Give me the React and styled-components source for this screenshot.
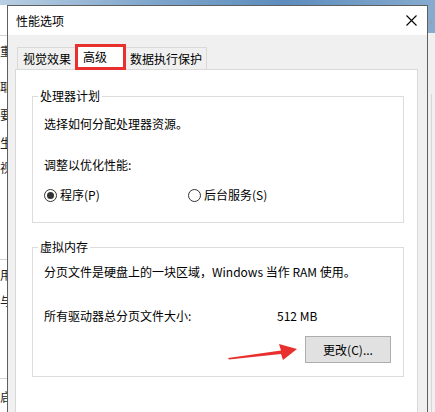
import React from 'react';
import styled, { createGlobalStyle } from 'styled-components';

const GlobalStyle = createGlobalStyle`
  html, body {
    margin: 0;
    padding: 0;
  }
  body {
    width: 435px;
    height: 412px;
    overflow: hidden;
    font-family: "Noto Sans CJK SC", "Noto Sans", sans-serif;
    font-size: 12px;
    color: #000000;
  }
`;

const Screen = styled.div`
  position: relative;
  display: grid;
  grid-template-columns: 7px 421px 7px;
  grid-template-rows: 5px 407px;
  width: 435px;
  height: 412px;
  overflow: hidden;
  background: #ffffff;
`;

const Sky = styled.div`
  grid-column: 1 / -1;
  background: linear-gradient(90deg, #b9cfe2 0%, #7fa6cc 35%, #5d8dbd 65%, #86abcf 100%);
`;

const LeftPeek = styled.div`
  display: flex;
  flex-direction: column;
  overflow: hidden;
  background: #ffffff;
  border-top: 30px solid #ffffff;
`;

const PeekLine = styled.div`
  height: 1px;
  background: #d4d4d4;
  margin-top: ${(p) => p.$top || 0}px;
  width: 7px;
`;

const PeekChar = styled.div`
  font-size: 12px;
  line-height: 14px;
  height: 14px;
  color: #222222;
  white-space: nowrap;
  margin-top: ${(p) => p.$top || 0}px;
`;

const RightPeek = styled.div`
  display: flex;
  flex-direction: column;
  overflow: hidden;
  background: linear-gradient(to bottom, #87aacd 0, #87aacd 28px, #f0f0f0 28px);
`;

const RightRule = styled.div`
  flex: 1;
  margin: 66px 0 0 3px;
  border-left: 1px solid #d6d6d6;
`;

const PeekArrow = styled.div`
  margin: 9px 0 0 2px;
  color: #9a9a9a;
  font-size: 12px;
  line-height: 14px;
  height: 14px;
`;

const Dialog = styled.div`
  display: flex;
  flex-direction: column;
  border: 1px solid #5f5f5f;
  border-bottom: none;
  background: #f0f0f0;
  min-height: 0;
`;

const TitleBar = styled.div`
  display: flex;
  align-items: center;
  justify-content: space-between;
  height: 29px;
  padding: 0 10px 0 8px;
  background: #ffffff;
`;

const TitleText = styled.span`
  font-size: 12px;
  line-height: 16px;
`;

const Body = styled.div`
  flex: 1;
  display: flex;
  flex-direction: column;
  padding: 9px 9px 0 7px;
  min-height: 0;
`;

const TabStrip = styled.div`
  position: relative;
  z-index: 1;
  display: flex;
  align-items: flex-end;
  height: 25px;
  padding-left: 2px;
`;

const Tab = styled.div`
  box-sizing: border-box;
  width: ${(p) => p.$width}px;
  height: 22px;
  border: 1px solid #d9d9d9;
  border-bottom: none;
  background: #f0f0f0;
  line-height: 21px;
  text-align: center;
  white-space: nowrap;
`;

const ActiveTab = styled.div`
  box-sizing: border-box;
  width: 51px;
  height: 26px;
  margin: 0 -1px -1px -2px;
  border: 3px solid #e8302f;
  background: #ffffff;
  padding-left: 5px;
  line-height: 20px;
  position: relative;
  z-index: 2;
`;

const Panel = styled.div`
  flex: 1;
  background: #ffffff;
  border: 1px solid #d9d9d9;
  border-bottom: none;
  padding: 18px 13px 0 16px;
`;

const Group = styled.fieldset`
  margin: ${(p) => p.$top || 0}px 0 0 0;
  padding: 0 12px ${(p) => p.$bottom}px 11px;
  border: 1px solid #dcdcdc;
  min-width: 0;
`;

const Legend = styled.legend`
  padding: 0 2px;
  margin-left: -6px;
  font-size: 12px;
  line-height: 16px;
`;

const Line = styled.div`
  line-height: 16px;
  margin-top: ${(p) => p.$top || 0}px;
  white-space: nowrap;
`;

const RadioRow = styled.div`
  display: grid;
  grid-template-columns: 144px auto;
  margin-top: ${(p) => p.$top || 0}px;
  line-height: 16px;
`;

const RadioOption = styled.label`
  display: flex;
  align-items: center;
  gap: 3px;
`;

const RadioCircle = styled.span`
  box-sizing: border-box;
  width: 13px;
  height: 13px;
  border: 1px solid #333333;
  border-radius: 50%;
  display: grid;
  place-items: center;

  &::after {
    content: '';
    width: 7px;
    height: 7px;
    border-radius: 50%;
    background: ${(p) => (p.$checked ? '#333333' : 'transparent')};
  }
`;

const SizeRow = styled.div`
  display: grid;
  grid-template-columns: 233px auto;
  line-height: 16px;
  margin-top: ${(p) => p.$top || 0}px;
`;

const ButtonRow = styled.div`
  display: flex;
  justify-content: flex-end;
  margin-top: ${(p) => p.$top || 0}px;
`;

const ChangeButton = styled.button`
  box-sizing: border-box;
  width: 86px;
  height: 27px;
  padding: 0;
  background: #e1e1e1;
  border: 1px solid #adadad;
  font-family: inherit;
  font-size: 12px;
  color: #000000;
`;

const ArrowMark = styled.svg`
  position: absolute;
  left: 224px;
  top: 340px;
  width: 76px;
  height: 24px;
  pointer-events: none;
`;

function CloseIcon() {
  return (
    <svg width="11" height="11" viewBox="0 0 11 11">
      <path d="M0.5 0.5 L10.5 10.5 M10.5 0.5 L0.5 10.5" stroke="#000" strokeWidth="1.1" />
    </svg>
  );
}

function App() {
  return (
    <>
      <GlobalStyle />
      <Screen>
        <Sky />
        <LeftPeek>
          <PeekLine />
          <PeekChar $top={8}>重</PeekChar>
          <PeekLine $top={31} />
          <PeekChar $top={-10}>耶</PeekChar>
          <PeekChar $top={14}>要</PeekChar>
          <PeekChar $top={14}>生</PeekChar>
          <PeekChar $top={11}>视</PeekChar>
          <PeekLine $top={84} />
          <PeekChar $top={8}>用</PeekChar>
          <PeekChar $top={12}>与</PeekChar>
          <PeekLine $top={70} />
          <PeekChar $top={11}>启</PeekChar>
        </LeftPeek>
        <Dialog>
          <TitleBar>
            <TitleText>性能选项</TitleText>
            <CloseIcon />
          </TitleBar>
          <Body>
            <TabStrip>
              <Tab $width={60}>视觉效果</Tab>
              <ActiveTab>高级</ActiveTab>
              <Tab $width={82}>数据执行保护</Tab>
            </TabStrip>
            <Panel>
              <Group $bottom={19}>
                <Legend>处理器计划</Legend>
                <Line $top={12}>选择如何分配处理器资源。</Line>
                <Line $top={25}>调整以优化性能:</Line>
                <RadioRow $top={14}>
                  <RadioOption>
                    <RadioCircle $checked />
                    程序(P)
                  </RadioOption>
                  <RadioOption>
                    <RadioCircle />
                    后台服务(S)
                  </RadioOption>
                </RadioRow>
              </Group>
              <Group $top={16} $bottom={13}>
                <Legend>虚拟内存</Legend>
                <Line $top={9}>分页文件是硬盘上的一块区域，Windows 当作 RAM 使用。</Line>
                <SizeRow $top={28}>
                  <span>所有驱动器总分页文件大小:</span>
                  <span>512 MB</span>
                </SizeRow>
                <ButtonRow $top={12}>
                  <ChangeButton>更改(C)...</ChangeButton>
                </ButtonRow>
              </Group>
            </Panel>
          </Body>
        </Dialog>
        <RightPeek>
          <PeekArrow>‹</PeekArrow>
          <RightRule />
        </RightPeek>
        <ArrowMark viewBox="0 0 76 24">
          <polygon
            points="4,18 57,10.5 55,4 73,9 59,20 57,14 5,19.5"
            fill="#e8302f"
          />
        </ArrowMark>
      </Screen>
    </>
  );
}

export default App;
